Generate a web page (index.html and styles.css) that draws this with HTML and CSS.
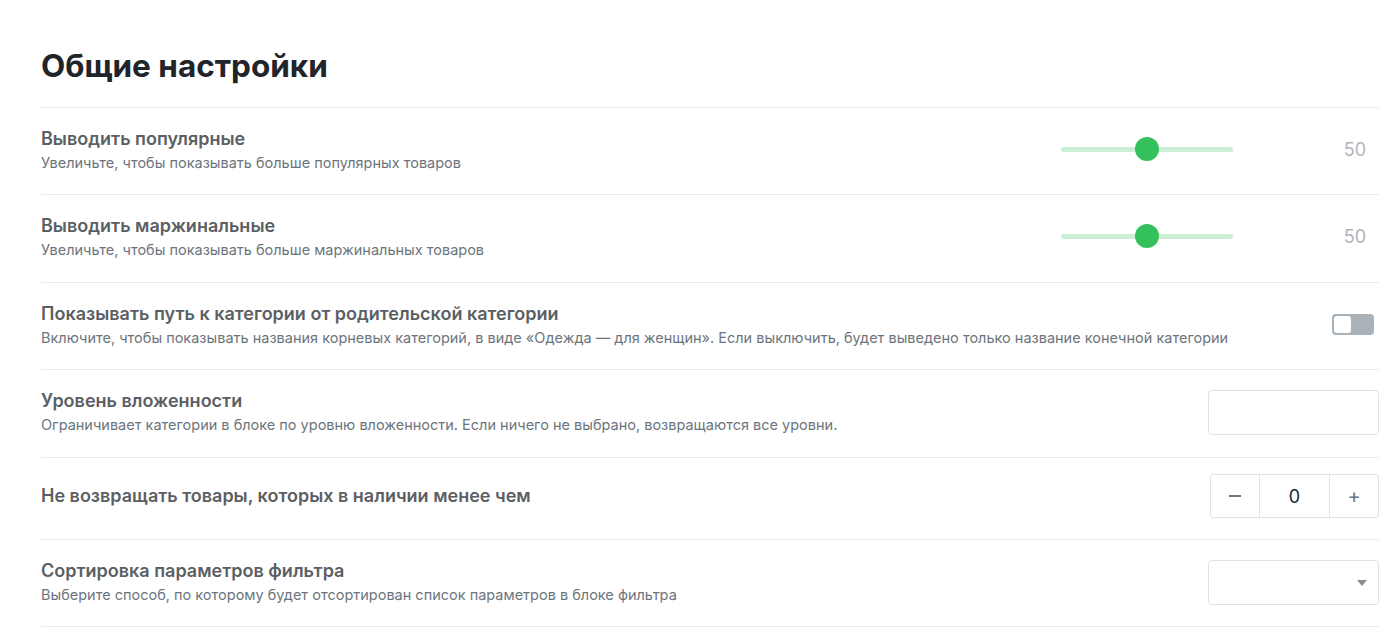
FILE: index.html
```html
<!DOCTYPE html>
<html lang="ru">
<head>
<meta charset="utf-8">
<link rel="stylesheet" href="styles.css">
</head>
<body>
<div class="page">
  <h1 class="title">Общие настройки</h1>
  <div class="list">
    <div class="row">
      <div class="text">
        <div class="label">Выводить популярные</div>
        <div class="desc">Увеличьте, чтобы показывать больше популярных товаров</div>
      </div>
      <div class="slider">
        <div class="track"><span class="thumb"></span></div>
        <div class="value">50</div>
      </div>
    </div>
    <div class="row">
      <div class="text">
        <div class="label">Выводить маржинальные</div>
        <div class="desc">Увеличьте, чтобы показывать больше маржинальных товаров</div>
      </div>
      <div class="slider">
        <div class="track"><span class="thumb"></span></div>
        <div class="value">50</div>
      </div>
    </div>
    <div class="row">
      <div class="text">
        <div class="label">Показывать путь к категории от родительской категории</div>
        <div class="desc">Включите, чтобы показывать названия корневых категорий, в виде «Одежда — для женщин». Если выключить, будет выведено только название конечной категории</div>
      </div>
      <div class="toggle"><span class="knob"></span></div>
    </div>
    <div class="row">
      <div class="text">
        <div class="label">Уровень вложенности</div>
        <div class="desc">Ограничивает категории в блоке по уровню вложенности. Если ничего не выбрано, возвращаются все уровни.</div>
      </div>
      <div class="field"></div>
    </div>
    <div class="row row-compact">
      <div class="text">
        <div class="label">Не возвращать товары, которых в наличии менее чем</div>
      </div>
      <div class="stepper">
        <div class="step-btn"><span class="minus"></span></div>
        <div class="step-val">0</div>
        <div class="step-btn">+</div>
      </div>
    </div>
    <div class="row">
      <div class="text">
        <div class="label">Сортировка параметров фильтра</div>
        <div class="desc">Выберите способ, по которому будет отсортирован список параметров в блоке фильтра</div>
      </div>
      <div class="field select"><span class="caret"></span></div>
    </div>
  </div>
</div>
</body>
</html>
```
FILE: styles.css
```css
* { box-sizing: border-box; }
html, body { margin: 0; padding: 0; background: #fff; }
body { font-family: Inter, "Noto Sans", sans-serif; }
.page { padding: 48px 21px 0 41px; }
.title {
  margin: 0 0 23px;
  font-size: 31.5px;
  line-height: 36px;
  font-weight: 700;
  color: #212529;
}
.list { border-top: 1px solid #e9ecef; }
.row {
  display: flex;
  align-items: center;
  justify-content: space-between;
  padding: 19px 0 21.4px;
  border-bottom: 1px solid #e9ecef;
}
.row-compact { padding: 16.5px 0 21px; }
.label {
  font-size: 18px;
  line-height: 24px;
  font-weight: 600;
  color: #5b5f64;
}
.desc {
  margin-top: 1px;
  font-size: 14.5px;
  line-height: 21px;
  color: #6c757d;
}
.slider { display: flex; align-items: center; width: 318px; margin-bottom: 2px; }
.track {
  position: relative;
  width: 172px;
  height: 5px;
  background: #ccf0d7;
  border-radius: 2px;
}
.thumb {
  position: absolute;
  left: 74px;
  top: -10px;
  width: 24px;
  height: 24px;
  border-radius: 50%;
  background: #34c15b;
}
.value {
  flex: 1;
  text-align: right;
  padding-right: 13px;
  font-size: 18px;
  color: #adb5bd;
}
.toggle {
  position: relative;
  width: 42px;
  height: 21px;
  margin-right: 5px;
  background: #aab2b9;
  border-radius: 4px;
}
.knob {
  position: absolute;
  left: 2px;
  top: 2px;
  width: 17px;
  height: 17px;
  background: #fff;
  border-radius: 3px;
}
.field {
  position: relative;
  width: 171px;
  height: 45px;
  border: 1px solid #dee2e6;
  border-radius: 4px;
}
.caret {
  position: absolute;
  right: 11px;
  top: 19px;
  width: 0;
  height: 0;
  border-left: 5px solid transparent;
  border-right: 5px solid transparent;
  border-top: 6px solid #888c90;
}
.stepper {
  display: flex;
  width: 169px;
  height: 44px;
  border: 1px solid #dee2e6;
  border-radius: 3px;
}
.step-btn {
  width: 48px;
  display: flex;
  align-items: center;
  justify-content: center;
  font-size: 20px;
  color: #6c757d;
}
.minus {
  width: 12px;
  height: 2px;
  background: #6c757d;
}
.step-val {
  flex: 1;
  display: flex;
  align-items: center;
  justify-content: center;
  border-left: 1px solid #dee2e6;
  border-right: 1px solid #dee2e6;
  font-size: 18px;
  color: #212529;
}
```
